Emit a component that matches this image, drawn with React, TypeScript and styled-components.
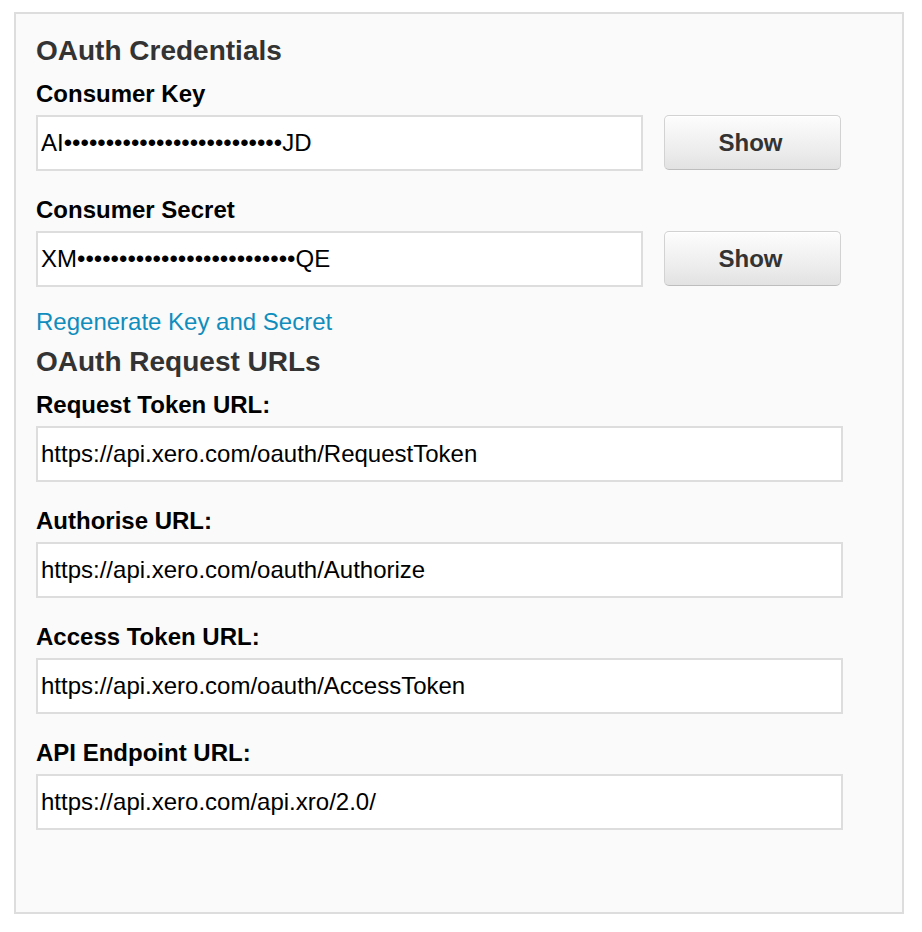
import React from "react";
import styled, { createGlobalStyle } from "styled-components";

const GlobalStyle = createGlobalStyle`
  html, body {
    margin: 0;
    padding: 0;
    background: #ffffff;
    font-family: "Liberation Sans", Arial, Helvetica, sans-serif;
  }
  * { box-sizing: border-box; }
`;

const Page = styled.div`
  padding: 12px 18px 0 14px;
`;

const Panel = styled.section`
  width: 890px;
  height: 902px;
  border: 2px solid #dddddd;
  background: #fafafa;
  padding: 21px 20px 0 20px;
  display: flex;
  flex-direction: column;
`;

const Heading = styled.h2`
  margin: 0 0 13px 0;
  font-size: 28px;
  line-height: 32px;
  font-weight: bold;
  color: #333333;
`;

const Field = styled.div<{ $last?: boolean }>`
  display: flex;
  flex-direction: column;
  margin-bottom: ${(p) => (p.$last ? "0" : "25px")};
`;

const Label = styled.label`
  font-size: 24px;
  line-height: 28px;
  font-weight: bold;
  color: #000000;
  margin-bottom: 7px;
`;

const Row = styled.div`
  display: flex;
  align-items: center;
  gap: 21px;
`;

const TextBox = styled.input<{ $width: number }>`
  width: ${(p) => p.$width}px;
  height: 56px;
  border: 2px solid #dddddd;
  background: #ffffff;
  padding: 0 0 0 3px;
  margin: 0;
  font-family: "Liberation Sans", Arial, Helvetica, sans-serif;
  font-size: 24px;
  color: #000000;
  outline: none;
  border-radius: 0;
`;

const ShowButton = styled.button`
  width: 177px;
  height: 55px;
  margin-top: -1px;
  border: 1px solid #d2d2d2;
  border-bottom-color: #bdbdbd;
  border-radius: 5px;
  background: linear-gradient(#fdfdfd, #ebebeb 70%, #e2e2e2);
  box-shadow: inset 0 1px 0 #ffffff;
  font-family: "Liberation Sans", Arial, Helvetica, sans-serif;
  font-size: 24px;
  font-weight: bold;
  color: #333333;
  padding: 0 4px 0 0;
  cursor: pointer;
`;

const Link = styled.a`
  display: block;
  margin: -4px 0 10px 0;
  font-size: 24px;
  line-height: 28px;
  color: #0f8dbd;
  text-decoration: none;
  cursor: pointer;
`;

const dots = "\u2022".repeat(26);

const credentials = [
  { label: "Consumer Key", value: `AI${dots}JD` },
  { label: "Consumer Secret", value: `XM${dots}QE` },
];

const urls = [
  { label: "Request Token URL:", value: "https://api.xero.com/oauth/RequestToken" },
  { label: "Authorise URL:", value: "https://api.xero.com/oauth/Authorize" },
  { label: "Access Token URL:", value: "https://api.xero.com/oauth/AccessToken" },
  { label: "API Endpoint URL:", value: "https://api.xero.com/api.xro/2.0/" },
];

export default function App() {
  return (
    <>
      <GlobalStyle />
      <Page>
        <Panel>
          <Heading>OAuth Credentials</Heading>
          {credentials.map((c) => (
            <Field key={c.label}>
              <Label>{c.label}</Label>
              <Row>
                <TextBox $width={607} readOnly value={c.value} />
                <ShowButton>Show</ShowButton>
              </Row>
            </Field>
          ))}
          <Link>Regenerate Key and Secret</Link>
          <Heading>OAuth Request URLs</Heading>
          {urls.map((u, i) => (
            <Field key={u.label} $last={i === urls.length - 1}>
              <Label>{u.label}</Label>
              <TextBox $width={807} readOnly value={u.value} />
            </Field>
          ))}
        </Panel>
      </Page>
    </>
  );
}
